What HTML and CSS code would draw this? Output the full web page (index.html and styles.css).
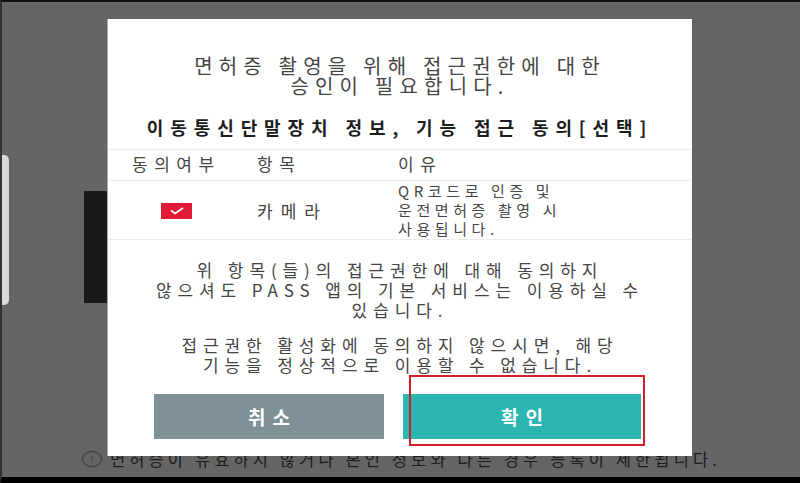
FILE: index.html
```html
<!doctype html>
<html>
  <head>
    <title>접근권한 안내</title>
    <meta name="viewport" content="width=device-width, user-scalable=no">
    <link rel="stylesheet" href="styles.css">
  </head>
  <body>
    <div class="screen">
      <div class="page">
        <div class="page-top">
          <div class="side-tab"></div>
          <div class="dark-block"></div>
        </div>
        <p class="note"><span class="info-icon">!</span>면허증이 유효하지 않거나 본인 정보와 다른 경우 등록이 제한됩니다.</p>
      </div>

      <div class="dialog">
        <p class="dialog-title">면허증 촬영을 위해 접근권한에 대한<br>승인이 필요합니다.</p>
        <p class="dialog-subtitle">이동통신단말장치 정보, 기능 접근 동의[선택]</p>

        <div class="perm-table">
          <div class="perm-row perm-head">
            <span>동의여부</span>
            <span>항목</span>
            <span>이유</span>
          </div>
          <div class="perm-row perm-item">
            <span class="check">
              <svg width="14" height="8" viewBox="0 0 14 8"><path d="M1 3.5 L5 6.5 L13 1" fill="none" stroke="#fff" stroke-width="1.6"/></svg>
            </span>
            <span>카메라</span>
            <span class="reason">QR코드로 인증 및<br>운전면허증 촬영 시<br>사용됩니다.</span>
          </div>
        </div>

        <div class="notice">
          <p>위 항목(들)의 접근권한에 대해 동의하지<br>않으셔도 PASS 앱의 기본 서비스는 이용하실 수<br>있습니다.</p>
          <p>접근권한 활성화에 동의하지 않으시면, 해당<br>기능을 정상적으로 이용할 수 없습니다.</p>
        </div>

        <div class="actions">
          <button type="button" class="btn btn-cancel">취소</button>
          <div class="confirm-wrap">
            <button type="button" class="btn btn-ok">확인</button>
            <div class="highlight"></div>
          </div>
        </div>
      </div>
    </div>
  </body>
</html>
```

FILE: styles.css
```css
body {
  margin: 0;
  font-family: "Noto Sans CJK KR", "Noto Sans", sans-serif;
  background-color: #000;
}
p {
  margin: 0;
}
.screen {
  position: relative;
  box-sizing: border-box;
  width: 800px;
  height: 483px;
  border-top: 2px solid #111;
  border-left: 2px solid #333;
  border-bottom: 6px solid #000;
  background-color: #656565;
  overflow: hidden;
}
.page {
  display: grid;
  grid-template-rows: 1fr auto;
  height: 100%;
}
.page-top {
  display: flex;
  align-items: flex-start;
}
.side-tab {
  width: 7px;
  height: 150px;
  margin-top: 153px;
  background-color: #d9d9d9;
  border-radius: 0 5px 5px 0;
}
.dark-block {
  width: 23px;
  height: 112px;
  margin-top: 189px;
  margin-left: 75px;
  background-color: #191919;
}
.note {
  display: flex;
  align-items: center;
  padding: 0 0 8px 80px;
  font-size: 16.5px;
  line-height: 20px;
  letter-spacing: 4.1px;
  color: #1c1c1c;
}
.info-icon {
  display: inline-block;
  box-sizing: border-box;
  width: 20px;
  height: 16px;
  margin-right: 8px;
  border: 1px solid #3a3a3a;
  border-radius: 50%;
  font-size: 10px;
  line-height: 14px;
  letter-spacing: 0;
  text-align: center;
  color: #3a3a3a;
}

/* dialog */
.dialog {
  position: absolute;
  top: 17px;
  left: 105px;
  width: 585px;
  height: 437px;
  box-sizing: border-box;
  background-color: #fff;
  border-left: 1px solid #aaa;
  display: flex;
  flex-direction: column;
  color: #454545;
}
.dialog-title {
  margin-top: 37px;
  text-align: center;
  font-size: 20px;
  line-height: 20px;
  letter-spacing: 6.2px;
}
.dialog-subtitle {
  margin-top: 21px;
  text-align: center;
  font-size: 18px;
  font-weight: bold;
  line-height: 20px;
  letter-spacing: 6.9px;
  color: #1d1d1d;
}
.perm-table {
  margin-top: 12px;
  border-top: 1px solid #ececec;
  border-bottom: 1px solid #ececec;
}
.perm-row {
  display: grid;
  grid-template-columns: 125px 141px 1fr;
  align-items: center;
  padding-left: 24px;
}
.perm-head {
  height: 30px;
  border-bottom: 1px solid #ececec;
  font-size: 17px;
  line-height: 20px;
  letter-spacing: 6.5px;
}
.perm-head span {
  margin-bottom: 3px;
}
.perm-item {
  height: 58px;
  font-size: 17px;
  letter-spacing: 8px;
}
.perm-item span {
  margin-bottom: 5px;
}
.check {
  display: flex;
  align-items: center;
  justify-content: center;
  width: 31px;
  height: 16px;
  margin-left: 29px;
  background-color: #e11b35;
}
.perm-item .reason {
  margin-bottom: 7px;
  font-size: 15px;
  line-height: 19px;
  letter-spacing: 4.6px;
}
.notice {
  padding-top: 20px;
  text-align: center;
  font-size: 17px;
  line-height: 20px;
  letter-spacing: 5.9px;
}
.notice p + p {
  margin-top: 15px;
}
.actions {
  display: flex;
  gap: 19px;
  margin-top: 19px;
  padding-left: 46px;
}
.btn {
  height: 45px;
  border: none;
  font-family: inherit;
  font-size: 19px;
  font-weight: bold;
  letter-spacing: 7px;
  text-indent: 7px;
  color: #fff;
}
.btn-cancel {
  width: 230px;
  background-color: #7e9197;
}
.confirm-wrap {
  position: relative;
}
.btn-ok {
  width: 238px;
  background-color: #2bb6b2;
}
.highlight {
  position: absolute;
  top: -19px;
  left: 6px;
  right: -4px;
  bottom: -7px;
  border: 2px solid #d21f2a;
}
```
